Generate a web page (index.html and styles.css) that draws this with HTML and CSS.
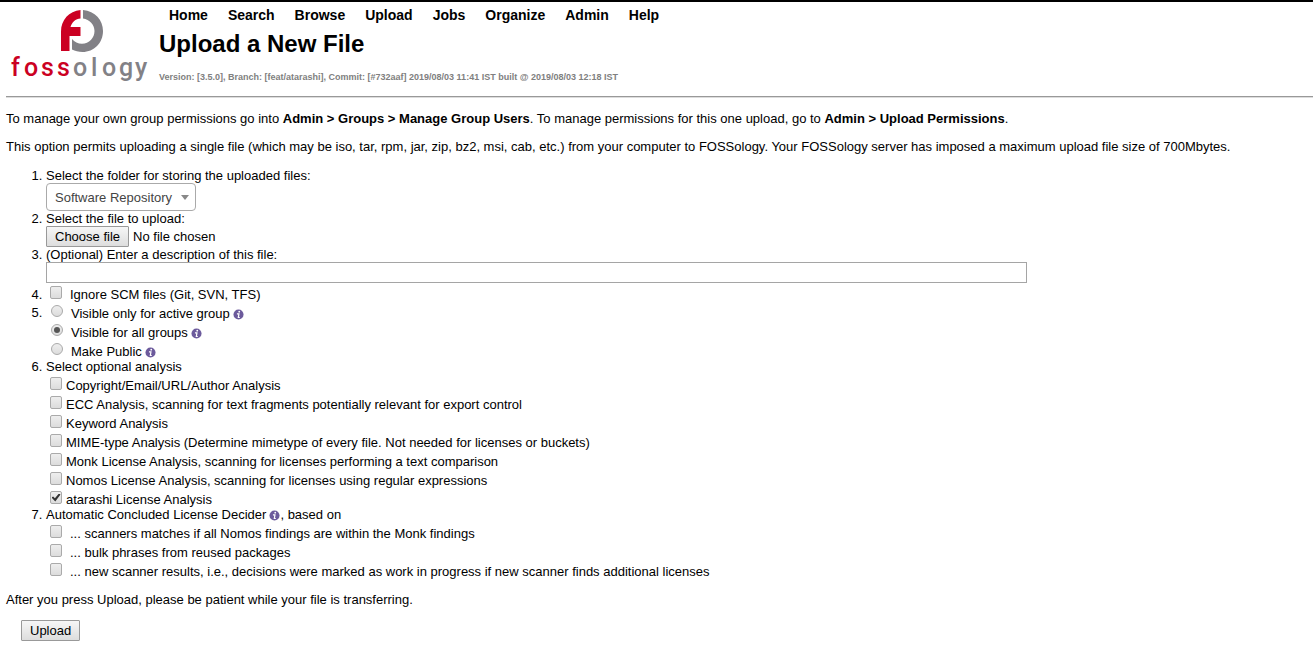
FILE: index.html
```html
<!DOCTYPE html>
<html lang="en">
<head>
<meta charset="utf-8">
<title>Upload a New File</title>
<link rel="stylesheet" href="styles.css">
</head>
<body>
<svg class="sprite" aria-hidden="true">
  <symbol id="info" viewBox="0 0 12 12">
    <circle cx="6" cy="6" r="5.500" fill="#6c5a9c"/>
    <circle cx="6.800" cy="2.900" r="1" fill="#fff"/>
    <path d="M4.300 5.300H6.500L5.800 9.300H7.400" fill="none" stroke="#fff" stroke-width="1.300"/>
  </symbol>
</svg>
<header class="header">
  <a class="logo" href="#" aria-label="FOSSology home">
    <svg class="logo-art" viewBox="0 0 148 82">
      <path fill="#cb0022" d="M74.500 8C63 9 55 18 55 29.500V49H63.500V34H74.500V25H64.500C66 20 69.500 17 74.500 16.500Z"/>
      <path fill="#828186" d="M77 8C89 9 97 18 97 29C97 41 88 50 76.500 50C72.500 50 69 49 66 47.500V37C68.500 40 72 41.700 76 41.700C83 41.700 88.500 36 88.500 29C88.500 22.500 83.500 17.500 77 16.500Z"/>
      <text class="wordmark" y="74"><tspan fill="#cb0022" x="5 18 35 51">foss</tspan><tspan fill="#828186" x="67 85 96 113 129">ology</tspan></text>
    </svg>
  </a>
  <div class="heading">
    <nav class="menu">
      <a href="#">Home</a><a href="#">Search</a><a href="#">Browse</a><a href="#">Upload</a><a href="#">Jobs</a><a href="#">Organize</a><a href="#">Admin</a><a href="#">Help</a>
    </nav>
    <h1 class="title">Upload a New File</h1>
    <small class="version">Version: [3.5.0], Branch: [feat/atarashi], Commit: [#732aaf] 2019/08/03 11:41 IST built @ 2019/08/03 12:18 IST</small>
  </div>
</header>
<main class="main">
  <p>To manage your own group permissions go into <b>Admin &gt; Groups &gt; Manage Group Users</b>. To manage permissions for this one upload, go to <b>Admin &gt; Upload Permissions</b>.</p>
  <p>This option permits uploading a single file (which may be iso, tar, rpm, jar, zip, bz2, msi, cab, etc.) from your computer to FOSSology. Your FOSSology server has imposed a maximum upload file size of 700Mbytes.</p>
  <form>
    <ol class="steps">
      <li>
        <label for="folder">Select the folder for storing the uploaded files:</label>
        <div class="select"><select id="folder"><option>Software Repository</option></select></div>
      </li>
      <li>
        <label for="file">Select the file to upload:</label>
        <div class="file"><input id="file" type="file"><span class="button">Choose file</span><span>No file chosen</span></div>
      </li>
      <li>
        <label for="description">(Optional) Enter a description of this file:</label>
        <input class="text" id="description" type="text">
      </li>
      <li><div class="row wide"><input id="scm" type="checkbox"><label for="scm">Ignore SCM files (Git, SVN, TFS)</label></div></li>
      <li>
        <div class="row wide"><input id="v1" name="visibility" type="radio"><label for="v1">Visible only for active group</label><svg class="info"><use href="#info"/></svg></div>
        <div class="row wide"><input id="v2" name="visibility" type="radio" checked><label for="v2">Visible for all groups</label><svg class="info"><use href="#info"/></svg></div>
        <div class="row wide"><input id="v3" name="visibility" type="radio"><label for="v3">Make Public</label><svg class="info"><use href="#info"/></svg></div>
      </li>
      <li>Select optional analysis
        <div class="row"><input id="a1" type="checkbox"><label for="a1">Copyright/Email/URL/Author Analysis</label></div>
        <div class="row"><input id="a2" type="checkbox"><label for="a2">ECC Analysis, scanning for text fragments potentially relevant for export control</label></div>
        <div class="row"><input id="a3" type="checkbox"><label for="a3">Keyword Analysis</label></div>
        <div class="row"><input id="a4" type="checkbox"><label for="a4">MIME-type Analysis (Determine mimetype of every file. Not needed for licenses or buckets)</label></div>
        <div class="row"><input id="a5" type="checkbox"><label for="a5">Monk License Analysis, scanning for licenses performing a text comparison</label></div>
        <div class="row"><input id="a6" type="checkbox"><label for="a6">Nomos License Analysis, scanning for licenses using regular expressions</label></div>
        <div class="row"><input id="a7" type="checkbox" checked><label for="a7">atarashi License Analysis</label></div>
      </li>
      <li><div class="decider">Automatic Concluded License Decider<svg class="info"><use href="#info"/></svg>, based on</div>
        <div class="row wide"><input id="d1" type="checkbox"><label for="d1">... scanners matches if all Nomos findings are within the Monk findings</label></div>
        <div class="row wide"><input id="d2" type="checkbox"><label for="d2">... bulk phrases from reused packages</label></div>
        <div class="row wide"><input id="d3" type="checkbox"><label for="d3">... new scanner results, i.e., decisions were marked as work in progress if new scanner finds additional licenses</label></div>
      </li>
    </ol>
    <p>After you press Upload, please be patient while your file is transferring.</p>
    <button class="button submit" type="button">Upload</button>
  </form>
</main>
</body>
</html>
```
FILE: styles.css
```css
* { box-sizing: border-box; }
body {
  margin: 0;
  padding-left: 6px;
  border-top: 2px solid #000;
  background: #fff;
  color: #000;
  font-family: "Liberation Sans", Arial, sans-serif;
  font-size: 13px;
  line-height: 15px;
}
.sprite { display: block; width: 0; height: 0; }
.header {
  display: flex;
  gap: 5px;
  padding-bottom: 12px;
  border-bottom: 1px solid #999;
  box-shadow: 0 1px #ddd;
}
.logo { flex: none; }
.logo-art { display: block; width: 148px; height: 82px; }
.wordmark { font-family: Roboto, sans-serif; font-size: 25px; font-weight: 500; }
.menu { display: flex; gap: 20px; padding: 5px 10px 0; }
.menu a {
  color: #000;
  font-size: 14px;
  font-weight: bold;
  line-height: 16px;
  text-decoration: none;
}
.title { margin: 7px 0 13px; font-size: 24px; line-height: 28px; }
.version {
  display: block;
  color: #808080;
  font-size: 9px;
  font-weight: bold;
  line-height: 12px;
}
.main { padding-top: 14px; }
.main p { margin: 0 0 13px; }
.steps { margin: 14px 0 13px; padding-left: 40px; }
.select { position: relative; width: 150px; }
.select select {
  display: block;
  width: 100%;
  height: 28px;
  padding: 0 8px;
  appearance: none;
  background: #fff;
  border: 1px solid #aaa;
  border-radius: 4px;
  color: #444;
  font: inherit;
}
.select::after {
  content: "";
  position: absolute;
  top: 12px;
  right: 7px;
  border: 4px solid transparent;
  border-top: 5px solid #888;
  border-bottom: 0;
  pointer-events: none;
}
.file {
  display: flex;
  position: relative;
  align-items: center;
  gap: 4px;
  width: max-content;
}
.file input { position: absolute; inset: 0; width: 100%; opacity: 0; }
.button {
  height: 21px;
  padding: 2px 8px;
  background: linear-gradient(#f6f6f6, #ddd);
  border: 1px solid #999;
  border-radius: 1px;
  color: #000;
  font: inherit;
}
.submit { display: block; margin-left: 15px; }
.text {
  display: block;
  width: 100%;
  max-width: 981px;
  height: 21px;
  padding: 2px;
  border: 1px solid #a5a5a5;
  font: inherit;
}
.row { display: flex; align-items: flex-end; min-height: 19px; }
.row input {
  display: grid;
  flex: none;
  place-items: center;
  width: 12px;
  height: 13px;
  margin: 3px 4px;
  appearance: none;
  background: linear-gradient(#eee, #dcdcdc);
  border: 1px solid #aaa;
  border-radius: 2px;
}
.row.wide input { margin-right: 8px; }
.row.wide input[type="radio"] {
  height: 12px;
  margin: 3px 8px 4px 5px;
  border-radius: 50%;
}
.row input[type="radio"]:checked::before {
  content: "";
  width: 6px;
  height: 6px;
  background: #555;
  border-radius: 50%;
}
.row input[type="checkbox"]:checked::before {
  content: "";
  width: 9px;
  height: 8px;
  background: #333;
  clip-path: polygon(0 50%, 18% 36%, 38% 58%, 82% 0, 100% 12%, 42% 100%);
}
.info { flex: none; width: 11px; height: 11px; margin-left: 3px; }
.row .info { margin-bottom: 1px; }
.decider .info { vertical-align: -2px; }
.decider { height: 15px; }
```
